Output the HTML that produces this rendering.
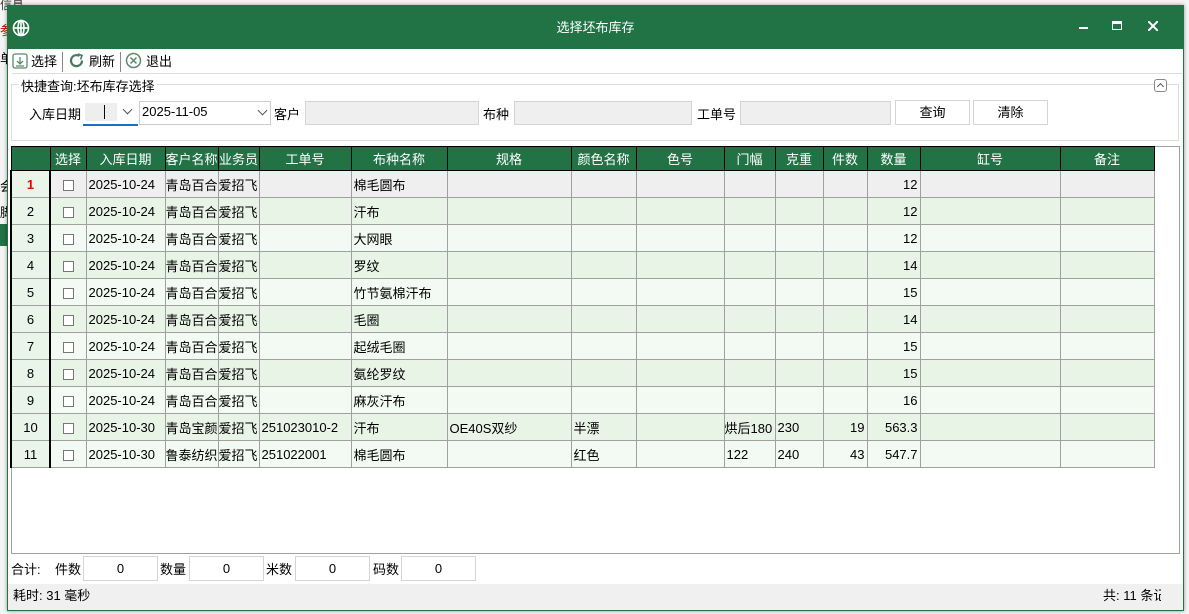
<!DOCTYPE html>
<html><head><meta charset="utf-8"><style>
*{box-sizing:border-box;margin:0;padding:0}
body{width:1189px;height:614px;background:#f5f5f5;font-family:"Liberation Sans","Noto Sans CJK SC",sans-serif;font-size:13px;color:#000;position:relative;overflow:hidden}
.a{position:absolute}
.win{left:7px;top:5px;width:1177px;height:606px;background:#fff;border:1px solid #217346;box-shadow:0 0 4px rgba(0,0,0,.4)}
.title{left:0;top:0;width:1175px;height:43px;background:#217346;color:#fff;text-align:center;line-height:43px;font-size:13px}
.inp{background:#efefef;border:1px solid #d4d4d4;height:24px}
.btn{background:#fff;border:1px solid #d4d4d4;height:25px;text-align:center;line-height:23px}
table{border-collapse:collapse;table-layout:fixed;position:absolute;left:10px;top:146px}
td,th{border:1px solid #a0a0a0;height:27px;white-space:nowrap;overflow:hidden;font-weight:normal;padding:0 2px}
th{background:#217346;color:#fff;border:1px solid #000;height:24px;text-align:center}
tr.o td{background:#f3faf3}
tr.e td{background:#e8f5e6}
tr.s td{background:#efefef}
td.n{background:#e8f5e8!important;text-align:center;border-left:2px solid #000;border-right:2px solid #000}
td.c{text-align:center}
td.r{text-align:right}
.cb{display:inline-block;width:11px;height:11px;border:1px solid #777;background:#fff;vertical-align:middle}
.tb{height:23px;line-height:23px}
.chev{position:absolute;width:7px;height:7px;border-right:1.3px solid #555;border-bottom:1.3px solid #555;transform:rotate(45deg)}
</style></head><body>
<div class="a" style="left:0;top:0;font-size:12px;color:#333;line-height:10px">信息</div>
<div class="a" style="left:0;top:20px;color:#c00">参</div>
<div class="a" style="left:0;top:48px">单</div>
<div class="a" style="left:0;top:176px">会</div>
<div class="a" style="left:0;top:202px">脚</div>
<div class="a" style="left:0;top:224px;width:8px;height:22px;background:#217346"></div>
<div class="a win">
 <div class="a title">选择坯布库存
  <svg class="a" style="left:4px;top:13px" width="18" height="18" viewBox="0 0 18 18" fill="none" stroke="#fff" stroke-width="1.6"><circle cx="9" cy="9" r="7.5"/><ellipse cx="9" cy="9" rx="3" ry="7.5"/><line x1="1.5" y1="9" x2="16.5" y2="9"/><line x1="9" y1="1.5" x2="9" y2="16.5"/></svg>
  <div class="a" style="left:1071px;top:21px;width:9px;height:2px;background:#fff"></div>
  <div class="a" style="left:1104px;top:15px;width:10px;height:9px;border:1.5px solid #fff;border-top-width:3px"></div>
  <svg class="a" style="left:1140px;top:15px" width="10" height="10" viewBox="0 0 10 10" stroke="#fff" stroke-width="2"><line x1="0" y1="0" x2="10" y2="10"/><line x1="10" y1="0" x2="0" y2="10"/></svg>
 </div>
 <div class="a tb" style="left:4px;top:44px;width:1170px;border-bottom:1px solid #ddd;height:24px"></div>
 <svg class="a" style="left:4px;top:47px" width="16" height="16" viewBox="0 0 16 16" fill="none" stroke="#5a8a6a" stroke-width="1.3"><rect x="1" y="1" width="14" height="14" rx="2"/><path d="M8 4v7M5 8l3 3 3-3M4 13h8"/></svg>
 <div class="a tb" style="left:23px;top:44px">选择</div>
 <div class="a" style="left:54px;top:46px;width:1px;height:20px;background:#888"></div>
 <svg class="a" style="left:60px;top:46px" width="17" height="17" viewBox="0 0 17 17" fill="none" stroke="#4a7a5a" stroke-width="2.2"><path d="M14 8.5A5.5 5.5 0 1 1 11.5 4"/><path d="M10 2l4 1.5-1.5 4" stroke-width="1.6"/></svg>
 <div class="a tb" style="left:81px;top:44px">刷新</div>
 <div class="a" style="left:112px;top:46px;width:1px;height:20px;background:#888"></div>
 <svg class="a" style="left:117px;top:46px" width="17" height="17" viewBox="0 0 17 17" fill="none" stroke="#5a8a6a" stroke-width="1.5"><circle cx="8.5" cy="8.5" r="7"/><path d="M5.5 5.5l6 6M11.5 5.5l-6 6"/></svg>
 <div class="a tb" style="left:138px;top:44px">退出</div>
 <div class="a" style="left:3px;top:78px;width:1168px;height:57px;border:1px solid #ddd"></div>
 <div class="a" style="left:11px;top:70px;background:#fff;padding:0 2px">快捷查询:坯布库存选择</div>
 <div class="a" style="left:1146px;top:73px;width:13px;height:13px;border:1px solid #888;border-radius:3px;background:#fff"><div class="chev" style="left:3px;top:4px;width:5px;height:5px;transform:rotate(225deg)"></div></div>
 <div class="a" style="left:21px;top:98px">入库日期</div>
 <div class="a" style="left:75px;top:95px;width:55px;height:25px;border-bottom:2px solid #1a6fc9">
  <div class="a" style="left:2px;top:2px;width:32px;height:18px;background:#eee"></div>
  <div class="a" style="left:21px;top:4px;width:1px;height:14px;background:#000"></div>
  <div class="chev" style="left:41px;top:5px"></div></div>
 <div class="a" style="left:131px;top:95px;width:132px;height:24px;border:1px solid #ccc;padding:2px"><span>2025-11-05</span><div class="chev" style="left:119px;top:5px"></div></div>
 <div class="a" style="left:266px;top:98px">客户</div>
 <div class="a inp" style="left:297px;top:95px;width:174px"></div>
 <div class="a" style="left:475px;top:98px">布种</div>
 <div class="a inp" style="left:506px;top:95px;width:178px"></div>
 <div class="a" style="left:689px;top:98px">工单号</div>
 <div class="a inp" style="left:732px;top:95px;width:151px"></div>
 <div class="a btn" style="left:887px;top:94px;width:75px">查询</div>
 <div class="a btn" style="left:965px;top:94px;width:75px">清除</div>
 <div class="a" style="left:3px;top:140px;width:1169px;height:408px;border:1px solid #a0a0a0"></div>
 <div class="a" style="left:3px;top:553px">合计:</div>
 <div class="a" style="left:47px;top:553px">件数</div>
 <div class="a btn" style="left:75px;top:550px;width:75px;height:25px">0</div>
 <div class="a" style="left:152px;top:553px">数量</div>
 <div class="a btn" style="left:181px;top:550px;width:75px;height:25px">0</div>
 <div class="a" style="left:258px;top:553px">米数</div>
 <div class="a btn" style="left:287px;top:550px;width:75px;height:25px">0</div>
 <div class="a" style="left:365px;top:553px">码数</div>
 <div class="a btn" style="left:393px;top:550px;width:75px;height:25px">0</div>
 <div class="a" style="left:0;top:578px;width:1175px;height:26px;background:#f0f0f0;line-height:24px;padding-left:5px">耗时: 31 毫秒<span class="a" style="left:1095px;width:58px;overflow:hidden;white-space:nowrap">共: 11 条记</span></div>
</div>
<table>
<colgroup><col style="width:39px"><col style="width:36px"><col style="width:79px"><col style="width:53px"><col style="width:41px"><col style="width:92px"><col style="width:96px"><col style="width:124px"><col style="width:65px"><col style="width:88px"><col style="width:51px"><col style="width:48px"><col style="width:44px"><col style="width:53px"><col style="width:140px"><col style="width:94px"></colgroup>
<tr><th></th><th>选择</th><th>入库日期</th><th style="padding:0">客户名称</th><th style="padding:0">业务员</th><th>工单号</th><th>布种名称</th><th>规格</th><th>颜色名称</th><th>色号</th><th>门幅</th><th>克重</th><th>件数</th><th>数量</th><th>缸号</th><th>备注</th></tr>
<tr class="s"><td class="n" style="color:#e00;font-weight:bold">1</td><td class="c"><span class="cb"></span></td><td>2025-10-24</td><td style="padding:0">青岛百合</td><td style="padding:0">爱招飞</td><td></td><td>棉毛圆布</td><td></td><td></td><td></td><td></td><td></td><td></td><td class="r">12</td><td></td><td></td></tr>
<tr class="e"><td class="n">2</td><td class="c"><span class="cb"></span></td><td>2025-10-24</td><td style="padding:0">青岛百合</td><td style="padding:0">爱招飞</td><td></td><td>汗布</td><td></td><td></td><td></td><td></td><td></td><td></td><td class="r">12</td><td></td><td></td></tr>
<tr class="o"><td class="n">3</td><td class="c"><span class="cb"></span></td><td>2025-10-24</td><td style="padding:0">青岛百合</td><td style="padding:0">爱招飞</td><td></td><td>大网眼</td><td></td><td></td><td></td><td></td><td></td><td></td><td class="r">12</td><td></td><td></td></tr>
<tr class="e"><td class="n">4</td><td class="c"><span class="cb"></span></td><td>2025-10-24</td><td style="padding:0">青岛百合</td><td style="padding:0">爱招飞</td><td></td><td>罗纹</td><td></td><td></td><td></td><td></td><td></td><td></td><td class="r">14</td><td></td><td></td></tr>
<tr class="o"><td class="n">5</td><td class="c"><span class="cb"></span></td><td>2025-10-24</td><td style="padding:0">青岛百合</td><td style="padding:0">爱招飞</td><td></td><td>竹节氨棉汗布</td><td></td><td></td><td></td><td></td><td></td><td></td><td class="r">15</td><td></td><td></td></tr>
<tr class="e"><td class="n">6</td><td class="c"><span class="cb"></span></td><td>2025-10-24</td><td style="padding:0">青岛百合</td><td style="padding:0">爱招飞</td><td></td><td>毛圈</td><td></td><td></td><td></td><td></td><td></td><td></td><td class="r">14</td><td></td><td></td></tr>
<tr class="o"><td class="n">7</td><td class="c"><span class="cb"></span></td><td>2025-10-24</td><td style="padding:0">青岛百合</td><td style="padding:0">爱招飞</td><td></td><td>起绒毛圈</td><td></td><td></td><td></td><td></td><td></td><td></td><td class="r">15</td><td></td><td></td></tr>
<tr class="e"><td class="n">8</td><td class="c"><span class="cb"></span></td><td>2025-10-24</td><td style="padding:0">青岛百合</td><td style="padding:0">爱招飞</td><td></td><td>氨纶罗纹</td><td></td><td></td><td></td><td></td><td></td><td></td><td class="r">15</td><td></td><td></td></tr>
<tr class="o"><td class="n">9</td><td class="c"><span class="cb"></span></td><td>2025-10-24</td><td style="padding:0">青岛百合</td><td style="padding:0">爱招飞</td><td></td><td>麻灰汗布</td><td></td><td></td><td></td><td></td><td></td><td></td><td class="r">16</td><td></td><td></td></tr>
<tr class="e"><td class="n">10</td><td class="c"><span class="cb"></span></td><td>2025-10-30</td><td style="padding:0">青岛宝颜</td><td style="padding:0">爱招飞</td><td>251023010-2</td><td>汗布</td><td>OE40S双纱</td><td>半漂</td><td></td><td style="padding:0">烘后180</td><td>230</td><td class="r">19</td><td class="r">563.3</td><td></td><td></td></tr>
<tr class="o"><td class="n">11</td><td class="c"><span class="cb"></span></td><td>2025-10-30</td><td style="padding:0">鲁泰纺织</td><td style="padding:0">爱招飞</td><td>251022001</td><td>棉毛圆布</td><td></td><td>红色</td><td></td><td>122</td><td>240</td><td class="r">43</td><td class="r">547.7</td><td></td><td></td></tr>
</table>
</body></html>
